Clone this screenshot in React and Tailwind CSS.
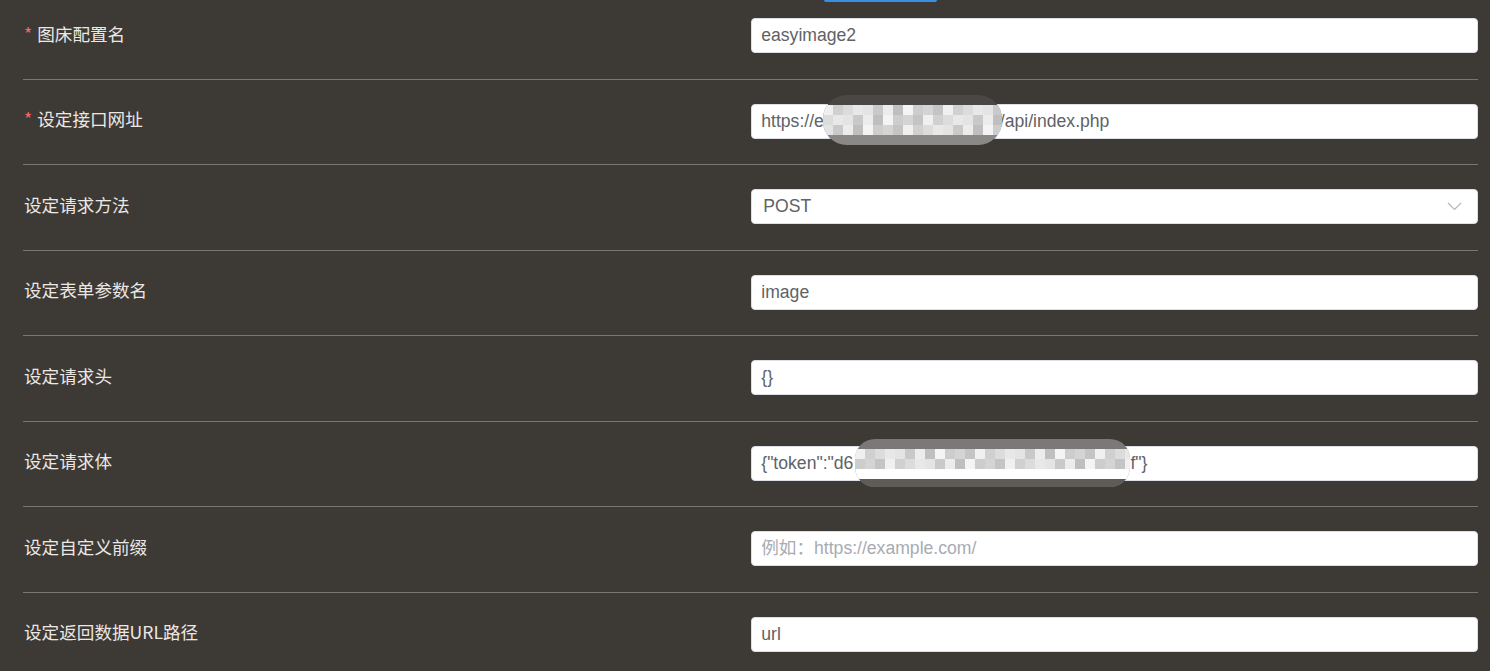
import { useState } from "react";

const rows = [
  { label: "图床配置名", required: true, value: "easyimage2" },
  { label: "设定接口网址", required: true, value: "https://e", tail: "/api/index.php", blur: "url" },
  { label: "设定请求方法", select: true, value: "POST" },
  { label: "设定表单参数名", value: "image" },
  { label: "设定请求头", value: "{}" },
  { label: "设定请求体", value: '{"token":"d6', tail: 'f"}', blur: "token" },
  { label: "设定自定义前缀", placeholder: "例如：https://example.com/" },
  { label: "设定返回数据URL路径", value: "url" },
];

const shades = ["#e8e8e8", "#d4d4d4", "#c9c9c9", "#f0f0f0", "#bfbfbf", "#dcdcdc", "#cdcdcd", "#e4e4e4", "#c4c4c4", "#ececec", "#d0d0d0", "#f4f4f4"];

function Mosaic({ cols, rowsCfg }) {
  return (
    <div className="flex flex-col">
      {rowsCfg.map((base, r) => (
        <div key={r} className="flex h-[10px]">
          {Array.from({ length: cols }).map((_, c) => (
            <div
              key={c}
              className="h-full w-[10px] shrink-0"
              style={{ backgroundColor: shades[(c * 7 + r * 5 + base) % shades.length] }}
            />
          ))}
        </div>
      ))}
    </div>
  );
}

function Blur({ kind }) {
  if (kind === "url") {
    return (
      <div className="absolute left-[72px] top-[-9px] flex h-[50px] w-[179px] flex-col overflow-hidden rounded-[24px] bg-[#4a4744]">
        <div className="h-[10px] shrink-0" />
        <div className="bg-[#e0e0e0]">
          <Mosaic cols={18} rowsCfg={[3, 0, 9]} />
        </div>
        <div className="flex-1 bg-[#8a8988]" />
      </div>
    );
  }
  return (
    <div className="absolute left-[104px] top-[-7px] flex h-[48px] w-[275px] flex-col overflow-hidden rounded-[20px] bg-[#7b7977]">
      <div className="h-[10px] shrink-0" />
      <div className="bg-[#e0e0e0]">
        <Mosaic cols={28} rowsCfg={[3, 1]} />
      </div>
      <div className="h-[10px] shrink-0 bg-white" />
      <div className="flex-1 bg-[#5e5c59]" />
    </div>
  );
}

function Field({ row }) {
  const [val, setVal] = useState(row.value || "");
  if (row.select) {
    return (
      <div className="flex h-[35px] w-full items-center justify-between rounded-[4px] border border-[#dcdfe6] bg-white pl-[11px] pr-[15px] text-[17.6px] text-[#606266]">
        <span>{val}</span>
        <svg width="15" height="9" viewBox="0 0 15 9" fill="none">
          <polyline points="1,1 7.5,7.5 14,1" stroke="#b4b7bd" strokeWidth="1.2" />
        </svg>
      </div>
    );
  }
  if (row.blur) {
    return (
      <div className="relative h-[35px] w-full">
        <div className="flex h-full w-full items-center rounded-[4px] border border-[#dcdfe6] bg-white pl-[9px] text-[17.6px] text-[#606266]">
          <span>{row.value}</span>
          <span className={row.blur === "url" ? "ml-[176px]" : "ml-[277px]"}>{row.tail}</span>
        </div>
        <Blur kind={row.blur} />
      </div>
    );
  }
  return (
    <input
      value={val}
      onChange={(e) => setVal(e.target.value)}
      placeholder={row.placeholder}
      className="h-[35px] w-full rounded-[4px] border border-[#dcdfe6] bg-white pl-[9px] text-[17.6px] text-[#606266] outline-none placeholder:text-[#a8abb2]"
    />
  );
}

export default function App() {
  return (
    <div
      className="min-h-screen bg-[#3d3935] pl-[23px] pr-[12px]"
      style={{ fontFamily: '"Liberation Sans", "Noto Sans CJK SC", sans-serif' }}
    >
      <div className="ml-[801px] h-[2px] w-[113px] rounded-b-[2px] bg-[#3a8ee6]" />
      {rows.map((row, i) => (
        <div
          key={row.label}
          className={`flex items-center border-b border-[#7a7570] pb-[25.5px] ${i === 0 ? "pt-4" : "pt-6"}`}
        >
          <div
            className="flex flex-1 items-center pb-[3px] pl-px text-[17.6px] text-[#ebe8e4]"
            style={{ fontFamily: '"Noto Sans CJK SC", sans-serif' }}
          >
            {row.required && <span className="mr-[5px] text-[#f56c6c]">*</span>}
            <span>{row.label}</span>
          </div>
          <div className="flex-1 pl-[0.5px]">
            <Field row={row} />
          </div>
        </div>
      ))}
    </div>
  );
}
